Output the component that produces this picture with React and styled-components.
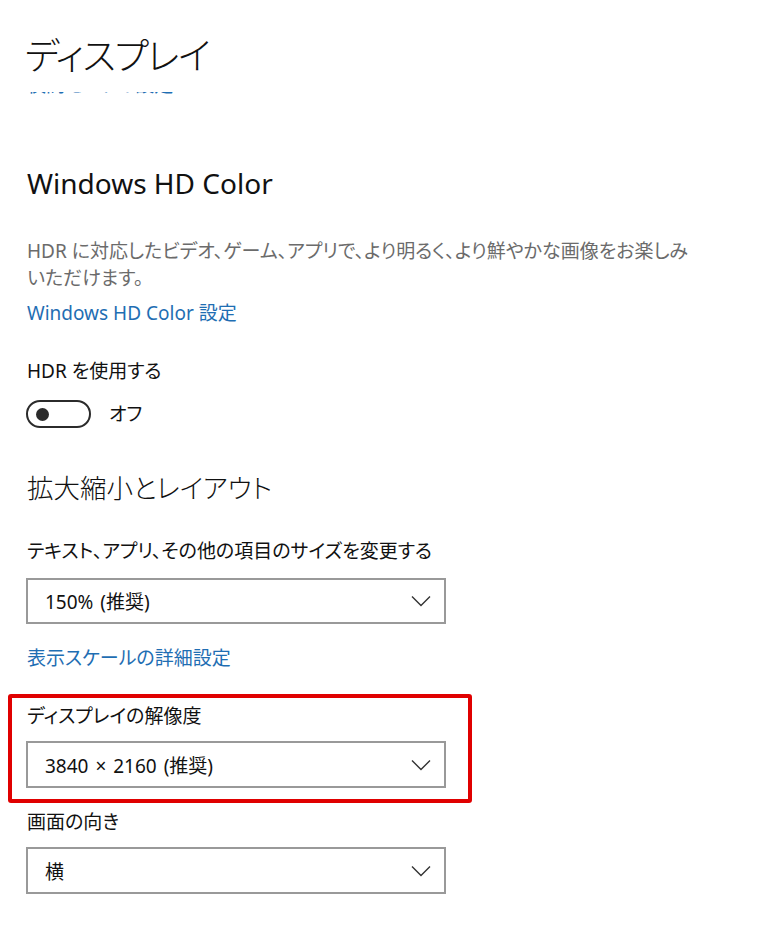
import React from "react";
import styled, { createGlobalStyle } from "styled-components";

const Global = createGlobalStyle`
  html, body { margin: 0; padding: 0; background: #fff; }
  body {
    font-family: "Noto Sans", "Noto Sans CJK JP", sans-serif;
    color: #111;
    font-feature-settings: "palt";
  }
`;

const Page = styled.div`
  width: 761px;
  height: 927px;
  overflow: hidden;
  padding-left: 27px;
  box-sizing: border-box;
`;

const Title = styled.h1`
  margin: 28px 0 0 -2px;
  font-size: 37px;
  line-height: 56px;
  font-weight: 300;
  letter-spacing: -1.5px;
  color: #111;
`;

const ClipStrip = styled.div`
  margin-top: 8px;
  height: 6px;
  overflow: hidden;
`;

const ClippedLink = styled.div`
  margin-top: -20px;
  font-size: 19px;
  line-height: 26px;
  color: #1f6eb3;
`;

const Heading = styled.h2`
  margin: ${(p) => p.$mt}px 0 0 0;
  font-size: ${(p) => p.$size}px;
  line-height: 40px;
  font-weight: ${(p) => p.$weight};
  color: #111;
`;

const Desc = styled.p`
  margin: 35px 0 0 0;
  font-size: 19px;
  line-height: 27px;
  color: #6b6b6b;
  white-space: nowrap;
`;

const Link = styled.div`
  margin-top: ${(p) => p.$mt}px;
  font-size: 19px;
  line-height: 26px;
  color: #1f6eb3;
`;

const Label = styled.div`
  margin-top: ${(p) => p.$mt}px;
  font-size: 19px;
  line-height: 26px;
  color: #111;
`;

const ToggleRow = styled.div`
  margin-top: 16px;
  display: flex;
  align-items: center;
  gap: 18px;
  margin-left: -1px;
`;

const Toggle = styled.div`
  width: 65px;
  height: 28px;
  box-sizing: border-box;
  border: 2px solid #2b2b2b;
  border-radius: 14px;
  display: flex;
  align-items: center;
  padding-left: 8px;
`;

const Knob = styled.div`
  width: 13px;
  height: 13px;
  border-radius: 50%;
  background: #2b2b2b;
`;

const ToggleText = styled.span`
  font-size: 19px;
  line-height: 26px;
  color: #111;
`;

const Select = styled.div`
  margin-top: ${(p) => p.$mt}px;
  margin-left: -1px;
  width: 420px;
  height: ${(p) => p.$h}px;
  box-sizing: border-box;
  border: 2px solid #999;
  display: flex;
  align-items: center;
  justify-content: space-between;
  padding: 0 13px 0 17px;
  font-size: 19px;
  word-spacing: 2px;
  color: #111;
`;

const Highlight = styled.div`
  position: relative;
  margin-top: 32px;
  width: 420px;
  &::after {
    content: "";
    position: absolute;
    top: -9px;
    left: -19px;
    right: -25px;
    bottom: -15px;
    border: 4px solid #e00000;
    border-radius: 3px;
    pointer-events: none;
  }
`;

const Chevron = () => (
  <svg width="20" height="12" viewBox="0 0 20 12" fill="none">
    <path d="M1 1.5 L10 10.5 L19 1.5" stroke="#333" strokeWidth="1.4" />
  </svg>
);

export default function App() {
  return (
    <>
      <Global />
      <Page>
        <Title>ディスプレイ</Title>
        <ClipStrip>
          <ClippedLink>夜間モードの設定</ClippedLink>
        </ClipStrip>

        <Heading $mt={65} $size={28} $weight={400}>Windows HD Color</Heading>
        <Desc>
          HDR に対応したビデオ、ゲーム、アプリで、より明るく、より鮮やかな画像をお楽しみ
          <br />
          いただけます。
        </Desc>
        <Link $mt={8}>Windows HD Color 設定</Link>

        <Label $mt={32}>HDR を使用する</Label>
        <ToggleRow>
          <Toggle>
            <Knob />
          </Toggle>
          <ToggleText>オフ</ToggleText>
        </ToggleRow>

        <Heading $mt={40} $size={26.5} $weight={300}>拡大縮小とレイアウト</Heading>
        <Label $mt={30}>テキスト、アプリ、その他の項目のサイズを変更する</Label>
        <Select $mt={14} $h={46}>
          <span>150% (推奨)</span>
          <Chevron />
        </Select>
        <Link $mt={21}>表示スケールの詳細設定</Link>

        <Highlight>
          <Label $mt={0}>ディスプレイの解像度</Label>
          <Select $mt={12} $h={47}>
            <span>3840 × 2160 (推奨)</span>
            <Chevron />
          </Select>
        </Highlight>

        <Label $mt={21}>画面の向き</Label>
        <Select $mt={12} $h={47}>
          <span>横</span>
          <Chevron />
        </Select>
      </Page>
    </>
  );
}
